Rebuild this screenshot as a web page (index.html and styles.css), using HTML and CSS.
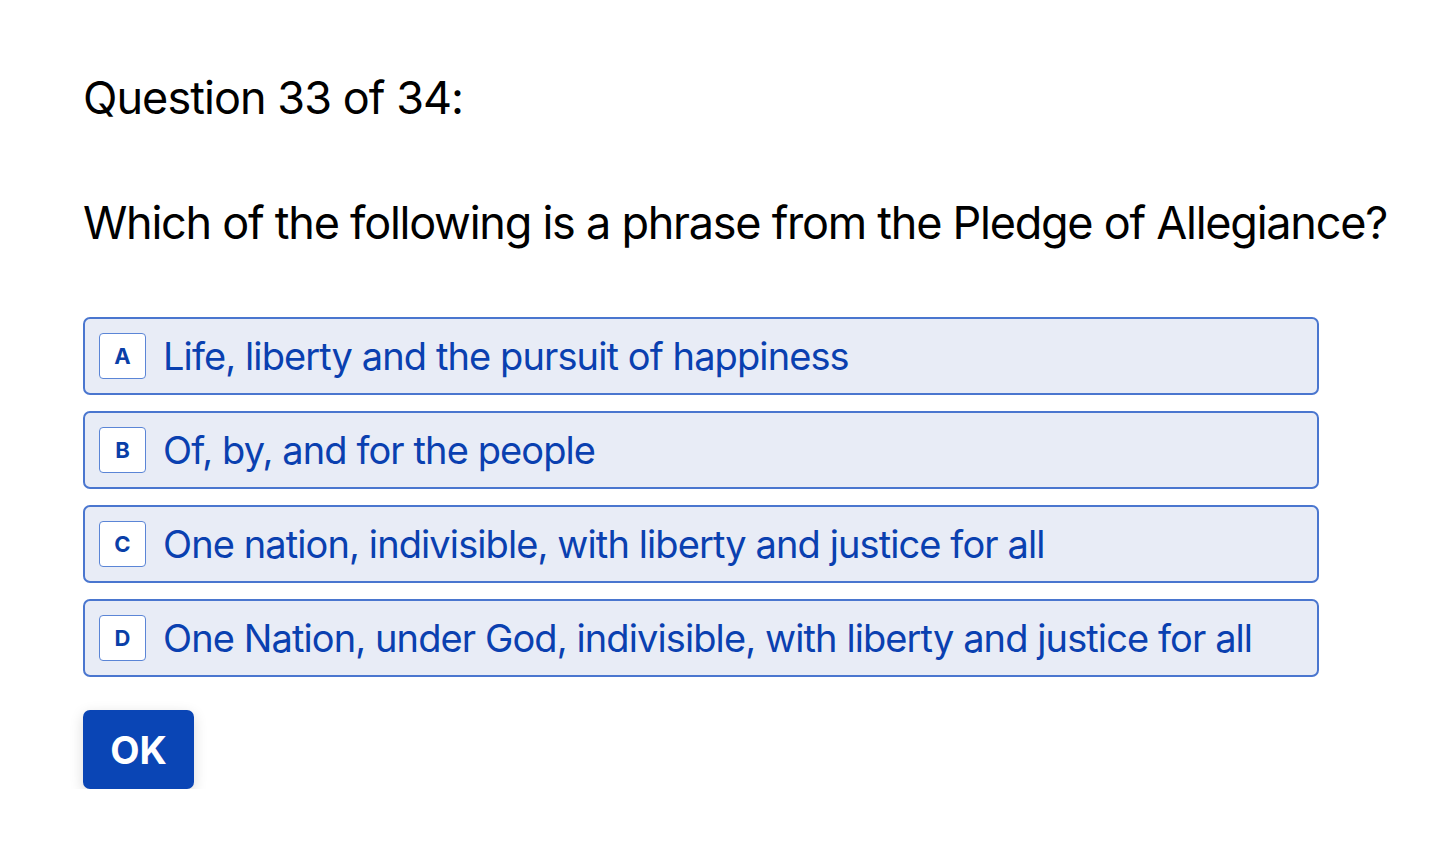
FILE: index.html
```html
<!DOCTYPE html>
<html lang="en">
<head>
<meta charset="utf-8">
<title>Quiz</title>
<link rel="stylesheet" href="styles.css">
</head>
<body>
<main class="quiz">
  <h1 class="counter">Question 33 of 34:</h1>
  <h2 class="question">Which of the following is a phrase from the Pledge of Allegiance?</h2>
  <ul class="options">
    <li class="option"><span class="key">A</span><span class="label">Life, liberty and the pursuit of happiness</span></li>
    <li class="option"><span class="key">B</span><span class="label">Of, by, and for the people</span></li>
    <li class="option"><span class="key">C</span><span class="label">One nation, indivisible, with liberty and justice for all</span></li>
    <li class="option"><span class="key">D</span><span class="label">One Nation, under God, indivisible, with liberty and justice for all</span></li>
  </ul>
  <button class="ok">OK</button>
</main>
</body>
</html>
```
FILE: styles.css
```css
* { box-sizing: border-box; }
html, body { margin: 0; padding: 0; background: #fff; }
body { font-family: Inter, "Noto Sans", sans-serif; color: #000; }
.quiz { padding: 70px 0 0 83px; }
.counter { margin: 0; font-size: 45px; font-weight: 400; line-height: 56px; letter-spacing: -0.95px; }
.question { margin: 69px 0 0 0; font-size: 45px; font-weight: 400; line-height: 56px; letter-spacing: -1.25px; }
.options { list-style: none; margin: 66px 0 0 0; padding: 0; width: 1236px; display: flex; flex-direction: column; gap: 16px; }
.option { height: 78px; display: flex; align-items: center; gap: 17px; padding: 0 14px; background: #e8ecf6; border: 2px solid #4a76cf; border-radius: 7px; color: #0a40b0; }
.key { width: 47px; height: 46px; flex: none; display: flex; align-items: center; justify-content: center; background: #fff; border: 1.5px solid #5b85d6; border-radius: 4px; font-weight: 700; font-size: 22px; color: #0a3fa8; }
.label { font-size: 38px; letter-spacing: -0.9px; }
.ok { margin-top: 33px; width: 111px; height: 79px; background: #0a45b5; color: #fff; border: none; border-radius: 7px; font-family: inherit; font-weight: 700; font-size: 38px; box-shadow: 0 4px 14px rgba(0,0,0,0.15); }
```
